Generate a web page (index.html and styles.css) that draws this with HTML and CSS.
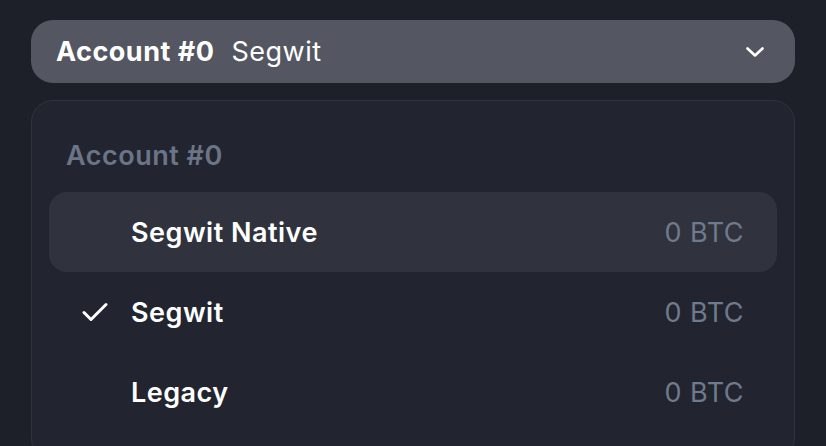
FILE: index.html
```html
<!DOCTYPE html>
<html lang="en">
<head>
    <meta charset="UTF-8">
    <meta name="viewport" content="width=device-width, initial-scale=1.0">
    <title>Account selector</title>
    <link rel="stylesheet" href="styles.css">
</head>
<body>
    <!-- Selector -->
    <button class="trigger">
        <span class="trigger-account">Account #0</span>
        <span class="trigger-type">Segwit</span>
        <svg class="chevron" width="18" height="10" viewBox="0 0 18 10">
            <path d="M1.5 1.5 L9 8.5 L16.5 1.5" fill="none" stroke="#fff" stroke-width="2.6" stroke-linecap="round" stroke-linejoin="round"/>
        </svg>
    </button>

    <!-- Dropdown -->
    <div class="menu">
        <div class="menu-title">Account #0</div>
        <div class="option hover">
            <span class="option-check"></span>
            <span class="option-name">Segwit Native</span>
            <span class="option-balance">0 BTC</span>
        </div>
        <div class="option">
            <span class="option-check">
                <svg width="26" height="20" viewBox="0 0 26 20">
                    <path d="M2 10.5 L9 17.5 L24 2.5" fill="none" stroke="#fff" stroke-width="3" stroke-linecap="round" stroke-linejoin="round"/>
                </svg>
            </span>
            <span class="option-name">Segwit</span>
            <span class="option-balance">0 BTC</span>
        </div>
        <div class="option">
            <span class="option-check"></span>
            <span class="option-name">Legacy</span>
            <span class="option-balance">0 BTC</span>
        </div>
    </div>
</body>
</html>
```

FILE: styles.css
```css
html, body {
    margin: 0;
    height: 100%;
    overflow: hidden;
}
body {
    background-color: #1d2029;
    font-family: Inter, "Noto Sans", sans-serif;
    letter-spacing: 0.5px;
    padding: 20px 31px 0;
    box-sizing: border-box;
}
.trigger {
    display: flex;
    align-items: center;
    width: 100%;
    height: 63px;
    padding: 0 31px 0 25px;
    border: none;
    border-radius: 22px;
    background-color: #545761;
    color: #fff;
    font-family: inherit;
    letter-spacing: inherit;
    font-size: 27px;
    box-sizing: border-box;
    cursor: pointer;
}
.trigger-account {
    font-weight: 700;
    margin-right: 17px;
}
.trigger-type {
    font-weight: 400;
    flex: 1;
    text-align: left;
}
.menu {
    margin-top: 17px;
    height: 360px;
    padding: 39px 17px 0;
    border: 1px solid #30333d;
    border-radius: 22px;
    background-color: #222530;
    box-sizing: border-box;
}
.menu-title {
    padding-left: 17px;
    height: 32px;
    line-height: 32px;
    margin-bottom: 20px;
    font-size: 27px;
    font-weight: 600;
    color: #6b7587;
}
.option {
    display: flex;
    align-items: center;
    height: 80px;
    padding: 0 33px;
    border-radius: 18px;
    font-size: 27px;
}
.option.hover {
    background-color: #30333d;
}
.option-check {
    width: 49px;
    display: flex;
    align-items: center;
}
.option-name {
    flex: 1;
    font-weight: 600;
    color: #fff;
}
.option-balance {
    color: #6f7a8c;
}
```
